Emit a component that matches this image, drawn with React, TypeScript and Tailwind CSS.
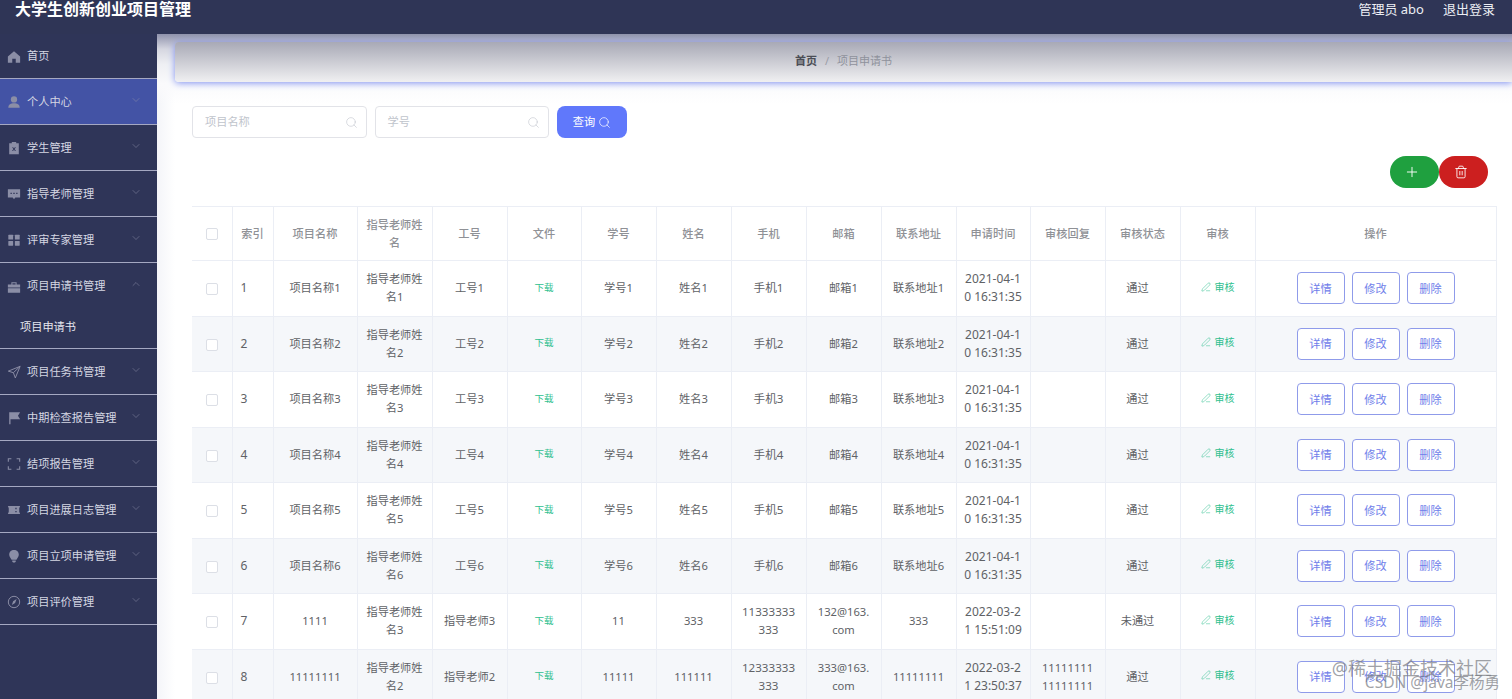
import { ChevronDown, ChevronUp, Plus, Search, Trash2, PenLine } from "lucide-react";
import type { ReactNode } from "react";

const font = { fontFamily: '"Noto Sans", "Noto Sans CJK SC", sans-serif' };

const icons: Record<string, ReactNode> = {
    home: <path fill="currentColor" d="M8 1.5 1 7.5V14.5H6V10H10V14.5H15V7.5Z" />,
    user: (
        <g fill="currentColor">
            <circle cx="8" cy="5" r="3.6" />
            <path d="M1.5 14.5C1.5 10.8 4.5 9.5 8 9.5S14.500 10.800 14.500 14.500Z" />
        </g>
    ),
    clipboard: (
        <path
            fill="currentColor"
            fillRule="evenodd"
            d="M5.500 1H10.500V2.500H13.500V15H2.500V2.500H5.500ZM5.800 7 7.300 9 5.800 11.500H6.900L8 9.800 9.100 11.500H10.200L8.700 9 10.200 7H9.100L8 8.300 6.900 7Z"
        />
    ),
    chat: (
        <path
            fill="currentColor"
            fillRule="evenodd"
            d="M1 2.500H15V12H9.500L8 14 6.500 12H1ZM4 6.500V8H5.500V6.500ZM7.200 6.500V8H8.800V6.500ZM10.500 6.500V8H12V6.500Z"
        />
    ),
    grid: (
        <g fill="currentColor">
            <rect x="1.500" y="2" width="5.500" height="5.500" rx="0.500" />
            <rect x="9" y="2" width="5.500" height="5.500" rx="0.500" />
            <rect x="1.500" y="9" width="5.500" height="5.500" rx="0.500" />
            <rect x="9" y="9" width="5.500" height="5.500" rx="0.500" />
        </g>
    ),
    case: (
        <path
            fill="currentColor"
            fillRule="evenodd"
            d="M5 2.500H11V5H15V8.500H1V5H5ZM6.200 3.700V5H9.800V3.700ZM1 9.500H15V14.500H1Z"
        />
    ),
    send: <path fill="none" stroke="currentColor" strokeWidth="1.100" d="M15 1.500 1.500 7 7.300 8.800 9.500 14.800Z M15 1.500 7.300 8.800" />,
    flag: <path fill="currentColor" d="M2.500 1.500H15L12.500 5.500 15 9.500H4V15H2.500Z" />,
    frame: (
        <path
            fill="none"
            stroke="currentColor"
            strokeWidth="1.200"
            d="M5 2H1.500V5.500M11 2H14.500V5.500M5 14H1.500V10.500M11 14H14.500V10.500"
        />
    ),
    ticket: (
        <path
            fill="currentColor"
            d="M1 3.500H15L14 6V10L15 12.500H1L2 10V6ZM9.500 5.500V7H11V5.500ZM9.500 9V10.500H11V9Z"
            fillRule="evenodd"
        />
    ),
    bulb: (
        <g fill="currentColor">
            <path d="M8 1C4.700 1 2.500 3.400 2.500 6.300 2.500 8.700 4.200 10.200 5.200 12.200H10.800C11.800 10.200 13.500 8.700 13.500 6.300 13.500 3.400 11.300 1 8 1Z" />
            <path d="M6 13H10V14.500L9 15.500H7L6 14.500Z" />
        </g>
    ),
    compass: (
        <g>
            <circle cx="8" cy="8" r="6.500" fill="none" stroke="currentColor" strokeWidth="1.100" />
            <path fill="currentColor" d="M11 4.500 9.200 9.200 5.500 11.500 7 7Z" />
        </g>
    ),
};

function MenuIcon({ name }: { name: string }) {
    return (
        <svg viewBox="0 0 16 16" className="w-[14px] h-[14px] text-[#8b8ea6] shrink-0">
            {icons[name]}
        </svg>
    );
}

const menu = [
    { icon: "user", label: "个人中心", active: true },
    { icon: "clipboard", label: "学生管理" },
    { icon: "chat", label: "指导老师管理" },
    { icon: "grid", label: "评审专家管理" },
    { icon: "case", label: "项目申请书管理", open: true },
    { icon: "send", label: "项目任务书管理" },
    { icon: "flag", label: "中期检查报告管理" },
    { icon: "frame", label: "结项报告管理" },
    { icon: "ticket", label: "项目进展日志管理" },
    { icon: "bulb", label: "项目立项申请管理" },
    { icon: "compass", label: "项目评价管理" },
];

function Sidebar() {
    return (
        <aside className="w-[157px] shrink-0 bg-[#2f3558] text-[11.200px] text-[#d5d7e3]">
            <div className="h-[45px] flex items-center gap-[6px] pl-[7px] pt-[1px] border-b border-[#a5a8c2]">
                <MenuIcon name="home" />
                <span>首页</span>
            </div>
            {menu.map((item) => (
                <div key={item.label}>
                    <div
                        className={`h-[46px] flex items-center gap-[6px] pl-[7px] pt-[1px] ${
                            item.open ? "" : "border-b border-[#a5a8c2]"
                        } ${item.active ? "bg-[#4353a5]" : ""}`}
                    >
                        <MenuIcon name={item.icon} />
                        <span className="flex-1">{item.label}</span>
                        {item.open ? (
                            <ChevronUp size={12} strokeWidth={1} className="mr-[15px] mb-[5px] text-[#8e91aa]" />
                        ) : (
                            <ChevronDown size={12} strokeWidth={1} className="mr-[15px] mb-[5px] text-[#8e91aa]" />
                        )}
                    </div>
                    {item.open && (
                        <div className="h-[40px] pb-[2px] flex items-center pl-[20px] text-[#e6e7ef] border-b border-[#a5a8c2]">
                            项目申请书
                        </div>
                    )}
                </div>
            ))}
        </aside>
    );
}

const columns = [40, 41, 84, 75, 75, 74, 75, 75, 75, 75, 75, 74, 75, 75, 75, 241];
const heads = [
    "",
    "索引",
    "项目名称",
    "指导老师姓\n名",
    "工号",
    "文件",
    "学号",
    "姓名",
    "手机",
    "邮箱",
    "联系地址",
    "申请时间",
    "审核回复",
    "审核状态",
    "审核",
    "操作",
];

type Row = {
    name: string;
    teacher: string;
    job: string;
    no: string;
    person: string;
    phone: string;
    mail: string;
    addr: string;
    time: string;
    reply: string;
    status: string;
};

const demo = (n: number): Row => ({
    name: `项目名称${n}`,
    teacher: `指导老师姓\n名${n}`,
    job: `工号${n}`,
    no: `学号${n}`,
    person: `姓名${n}`,
    phone: `手机${n}`,
    mail: `邮箱${n}`,
    addr: `联系地址${n}`,
    time: "2021-04-1\n0 16:31:35",
    reply: "",
    status: "通过",
});

const rows: Row[] = [
    demo(1),
    demo(2),
    demo(3),
    demo(4),
    demo(5),
    demo(6),
    {
        name: "1111",
        teacher: "指导老师姓\n名3",
        job: "指导老师3",
        no: "11",
        person: "333",
        phone: "11333333\n333",
        mail: "132@163.\ncom",
        addr: "333",
        time: "2022-03-2\n1 15:51:09",
        reply: "",
        status: "未通过",
    },
    {
        name: "11111111",
        teacher: "指导老师姓\n名2",
        job: "指导老师2",
        no: "11111",
        person: "111111",
        phone: "12333333\n333",
        mail: "333@163.\ncom",
        addr: "11111111",
        time: "2022-03-2\n1 23:50:37",
        reply: "11111111\n11111111",
        status: "通过",
    },
];

function Checkbox() {
    return <span className="inline-block w-[12px] h-[12px] bg-white border border-[#dcdfe6] rounded-[2px] align-middle" />;
}

function Cell({ children, first, className = "" }: { children?: ReactNode; first?: boolean; className?: string }) {
    return (
        <td className={`border-[#ebeef5] border-b text-center whitespace-pre-line p-0 leading-[18px] ${first ? "" : "border-l"} ${className}`}>
            {children}
        </td>
    );
}

function ActionButton({ label }: { label: string }) {
    return (
        <button className="w-[48px] h-[32px] pt-[1px] bg-white border border-[#8f9bea] rounded-[4px] text-[#6f80ea] text-[11.200px]">
            {label}
        </button>
    );
}

function DataTable() {
    return (
        <table className="table-fixed w-[1304px] border-t border-r border-[#ebeef5] text-[11.200px] text-[#606266]">
            <colgroup>
                {columns.map((w, i) => (
                    <col key={i} style={{ width: w }} />
                ))}
            </colgroup>
            <thead>
                <tr className="h-[54px] text-[#8f9196]">
                    {heads.map((h, i) => (
                        <th
                            key={i}
                            className={`border-[#ebeef5] border-b font-medium whitespace-pre-line leading-[18px] p-0 ${i ? "border-l" : ""}`}
                        >
                            {i === 0 ? <Checkbox /> : h}
                        </th>
                    ))}
                </tr>
            </thead>
            <tbody>
                {rows.map((r, i) => (
                    <tr key={i} className={`h-[55.5px] ${i % 2 ? "bg-[#f5f7fa]" : "bg-white"}`}>
                        <Cell first>
                            <Checkbox />
                        </Cell>
                        <td className="border-l border-b border-[#ebeef5] pl-[8px] p-0 text-[12px]">{i + 1}</td>
                        <Cell>{r.name}</Cell>
                        <Cell>{r.teacher}</Cell>
                        <Cell>{r.job}</Cell>
                        <Cell>
                            <span className="text-[#2fbf8f] text-[9.500px] relative top-[-1px]">下载</span>
                        </Cell>
                        <Cell>{r.no}</Cell>
                        <Cell>{r.person}</Cell>
                        <Cell className="text-[11.600px]">{r.phone}</Cell>
                        <Cell>{r.mail}</Cell>
                        <Cell>{r.addr}</Cell>
                        <Cell className="text-[12px]">{r.time}</Cell>
                        <Cell>{r.reply}</Cell>
                        <Cell className="pr-[10px]">{r.status}</Cell>
                        <Cell>
                            <span className="inline-flex items-center gap-[4px] text-[#2fbf8f] text-[10px] relative top-[-1px]">
                                <PenLine size={10} strokeWidth={1.2} />
                                审核
                            </span>
                        </Cell>
                        <Cell>
                            <div className="flex justify-center gap-[7px]">
                                <ActionButton label="详情" />
                                <ActionButton label="修改" />
                                <ActionButton label="删除" />
                            </div>
                        </Cell>
                    </tr>
                ))}
            </tbody>
        </table>
    );
}

function SearchInput({ placeholder }: { placeholder: string }) {
    return (
        <div className="w-[174.500px] h-[32px] flex items-center justify-between pl-[12px] pr-[8px] bg-white border border-[#e2e3e8] rounded-[4px] text-[11.200px] text-[#c0c4cc]">
            <span className="pt-[1px]">{placeholder}</span>
            <Search size={13} strokeWidth={1.1} />
        </div>
    );
}

export default function App() {
    return (
        <div className="relative w-[1512px] h-[699px] overflow-hidden bg-white flex flex-col" style={font}>
            <header className="h-[34px] shrink-0 bg-[#2f3556] flex items-start justify-between pl-[15px] pr-[17px] text-white">
                <h1 className="text-[16px] leading-[18px] font-bold">大学生创新创业项目管理</h1>
                <div className="flex gap-[19px] text-[13px] leading-[18px] text-[#eceef4]">
                    <span>管理员 abo</span>
                    <span>退出登录</span>
                </div>
            </header>
            <div className="flex flex-1 min-h-0">
                <Sidebar />
                <main className="flex-1 min-w-0 bg-[linear-gradient(180deg,#8f92ac_0,#d5d6e0_15px,#eeeff3_30px,#fafafc_50px,transparent_70px),linear-gradient(90deg,#f4f5f9,#fff_18px)]">
                    <div className="ml-[18px] mt-[8px] h-[40px] rounded-l-[4px] flex items-center justify-center gap-[8px] pb-[1px] text-[11px] bg-[linear-gradient(180deg,#a8a9b6,#f0f0f2)] shadow-[0_1px_7px_#7f90f0]">
                        <span className="font-bold text-[#4b4d55]">首页</span>
                        <span className="text-[#9a9ca6]">/</span>
                        <span className="text-[#8f929c]">项目申请书</span>
                    </div>
                    <div className="pl-[35px] pr-[16px] mt-[8px]">
                        <div className="pt-[16px] flex gap-[8px]">
                            <SearchInput placeholder="项目名称" />
                            <SearchInput placeholder="学号" />
                            <button className="w-[70px] h-[32px] flex items-center justify-center gap-[3px] rounded-[8px] bg-[#6078fb] text-white text-[11.200px]">
                                <span className="pt-[1px]">查询</span>
                                <Search size={13} strokeWidth={1.3} />
                            </button>
                        </div>
                        <div className="mt-[18px] pr-[8px] flex justify-end">
                            <button className="w-[49px] h-[32px] pr-[5px] flex items-center justify-center rounded-full bg-[#1fa03f] text-white">
                                <Plus size={16} strokeWidth={1.4} />
                            </button>
                            <button className="w-[49px] h-[32px] pr-[5px] flex items-center justify-center rounded-full bg-[#cc1f1f] text-white">
                                <Trash2 size={14} strokeWidth={1.5} />
                            </button>
                        </div>
                        <div className="mt-[18px]">
                            <DataTable />
                        </div>
                    </div>
                </main>
            </div>
            <div className="absolute right-[20px] top-[657px] text-[18px] leading-[22px] text-[#77797f]/70 whitespace-nowrap">
                @稀土掘金技术社区
            </div>
            <div className="absolute right-[12px] top-[672px] text-[15.500px] leading-[20px] text-[#77797f]/70 whitespace-nowrap">
                CSDN @java李杨勇
            </div>
        </div>
    );
}
